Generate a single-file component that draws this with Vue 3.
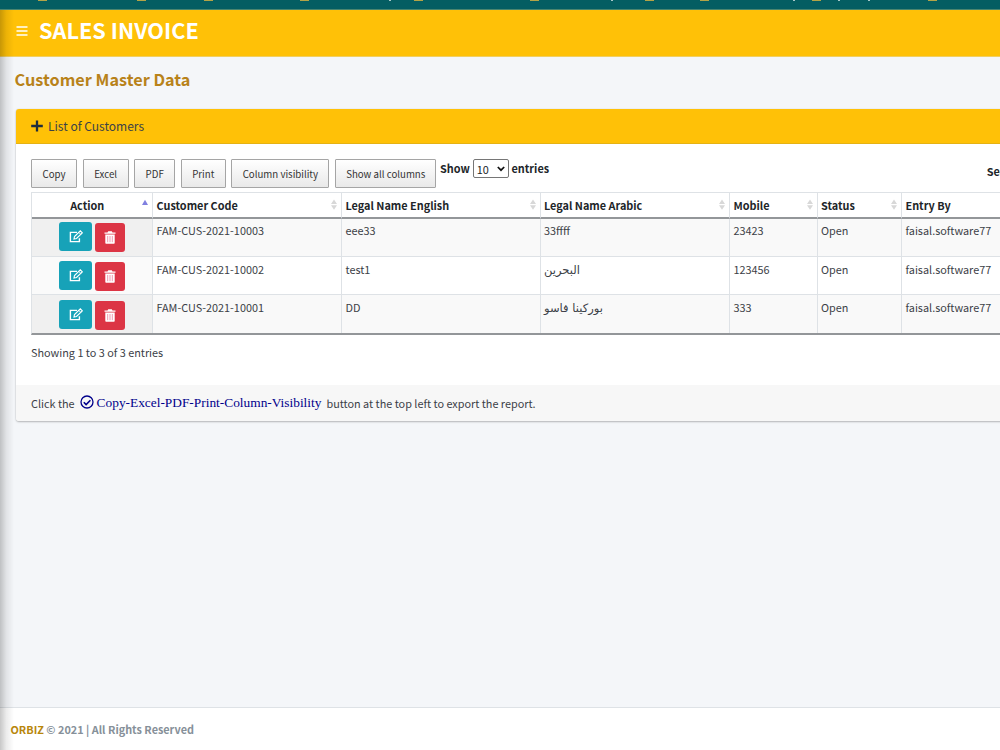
<template>
  <div class="wrapper">
    <nav class="top-menu">
      <svg width="1000" height="2" viewBox="0 0 1000 2">
        <rect v-for="x in menuIcons" :key="x" :x="x" y="0" width="9" height="1" fill="#b3a446" />
        <rect v-for="x in menuTails" :key="x" :x="x" y="0" width="2" height="1" fill="#a9c8ca" />
      </svg>
    </nav>

    <header class="main-header">
      <svg class="bars" width="12" height="12" viewBox="0 0 12 12">
        <path d="M0.5 2h11M0.5 6h11M0.5 10h11" stroke="#fff" stroke-width="1.7" />
      </svg>
      <span class="brand">SALES INVOICE</span>
    </header>

    <main class="content">
      <h1 class="page-title">Customer Master Data</h1>

      <section class="card">
        <div class="card-header">
          <svg class="plus" width="12" height="12" viewBox="0 0 12 12">
            <path d="M6 0.4v11.2M0.2 6h11.6" stroke="#1f2d3d" stroke-width="2.3" />
          </svg>
          <span>List of Customers</span>
        </div>

        <div class="card-body">
          <div class="toolbar">
            <button v-for="b in buttons" :key="b.label" class="dt-button" :style="{ width: b.width + 'px' }">{{ b.label }}</button>
            <div class="length">
              <span>Show</span>
              <span class="select">
                10
                <svg width="8" height="6" viewBox="0 0 8 6">
                  <path d="M0.8 1l3.2 3.2L7.2 1" fill="none" stroke="#111" stroke-width="1.7" />
                </svg>
              </span>
              <span>entries</span>
            </div>
            <span class="search">Search:</span>
          </div>

          <table>
            <colgroup>
              <col v-for="c in columns" :key="c.label" :style="{ width: c.width + 'px' }" />
            </colgroup>
            <thead>
              <tr>
                <th v-for="(c, i) in columns" :key="c.label">
                  <div class="th-inner">
                    <span class="th-label">{{ c.label }}</span>
                    <svg v-if="i === 0" class="sort" width="6" height="12" viewBox="0 0 6 12">
                      <path d="M0 6L3 0.8L6 6z" fill="#8080e0" />
                    </svg>
                    <svg v-else class="sort" width="6" height="12" viewBox="0 0 6 12">
                      <path d="M0 5L3 0.5L6 5zM0 6.2L3 10.7L6 6.2z" fill="#d8d8d8" />
                    </svg>
                  </div>
                </th>
              </tr>
            </thead>
            <tbody>
              <tr v-for="row in customers" :key="row.code">
                <td>
                  <div class="actions">
                    <button class="btn edit">
                      <svg width="14" height="13" viewBox="0 0 14 13" fill="none" stroke="#fff">
                        <path d="M8 2.4H1.4v9.2h9V8.2" stroke-width="1.4" />
                        <path d="M5 9l.5-2.5L11.3.9l2 2L7.5 8.5z" stroke-width="1.2" />
                        <path d="M9.8 2.4l2 2" stroke-width="1" />
                      </svg>
                    </button>
                    <button class="btn delete">
                      <svg width="12" height="13" viewBox="0 0 12 13">
                        <path d="M.5 1.4h3L4.2.3h3.6l.7 1.1h3v1.4H.5z" fill="#fff" />
                        <path d="M1.3 3.5h9.4V12q0 .8-.8.8H2.1q-.8 0-.8-.8z" fill="#fff" />
                        <path d="M3.7 5v6.2M6 5v6.2M8.3 5v6.2" stroke="#ee8fa6" stroke-width=".9" />
                      </svg>
                    </button>
                  </div>
                </td>
                <td>{{ row.code }}</td>
                <td>{{ row.english }}</td>
                <td><span :class="{ arabic: row.rtl }">{{ row.arabic }}</span></td>
                <td>{{ row.mobile }}</td>
                <td>Open</td>
                <td>faisal.software77</td>
              </tr>
            </tbody>
          </table>
          <p class="info">Showing 1 to 3 of 3 entries</p>
        </div>

        <div class="card-footer">
          <span>Click the</span>
          <svg class="check" width="14" height="14" viewBox="0 0 14 14" fill="none" stroke="#00008b">
            <circle cx="7" cy="7" r="6" stroke-width="1.3" />
            <path d="M3.8 7.2l2.3 2.3 4.3-4.3" stroke-width="1.6" />
          </svg>
          <span class="export">Copy-Excel-PDF-Print-Column-Visibility</span>
          <span class="tail">button at the top left to export the report.</span>
        </div>
      </section>
    </main>

    <footer class="main-footer">
      <span class="orbiz">ORBIZ</span><span>© 2021 | All Rights Reserved</span>
    </footer>
    <div class="side-shadow"></div>
  </div>
</template>

<script setup>
import { ref } from 'vue';

// bottom edges of the menu entries scrolled out of view
const menuIcons = [38, 137, 204, 300, 414, 530, 645, 700, 812, 928];
const menuTails = [389, 611, 793, 838, 868];

const buttons = [
  { label: 'Copy', width: 46 },
  { label: 'Excel', width: 46 },
  { label: 'PDF', width: 41 },
  { label: 'Print', width: 45 },
  { label: 'Column visibility', width: 98 },
  { label: 'Show all columns', width: 101.5 }
];

const columns = [
  { label: 'Action', width: 121 },
  { label: 'Customer Code', width: 189 },
  { label: 'Legal Name English', width: 198.5 },
  { label: 'Legal Name Arabic', width: 189.5 },
  { label: 'Mobile', width: 87.5 },
  { label: 'Status', width: 84.5 },
  { label: 'Entry By', width: 140 }
];

const customers = ref([
  { code: 'FAM-CUS-2021-10003', english: 'eee33', arabic: '33ffff', mobile: '23423' },
  { code: 'FAM-CUS-2021-10002', english: 'test1', arabic: 'البحرين', mobile: '123456', rtl: true },
  { code: 'FAM-CUS-2021-10001', english: 'DD', arabic: 'بوركينا فاسو', mobile: '333', rtl: true }
]);
</script>

<style>
body {
  margin: 0;
  overflow: hidden;
}
</style>

<style scoped>
.wrapper {
  position: relative;
  display: flex;
  flex-direction: column;
  width: 1000px;
  height: 750px;
  overflow: hidden;
  background: #f4f6f9;
  color: #3c4147;
  font-family: "Noto Sans CJK SC", "Noto Sans", sans-serif;
  font-size: 10.85px;
  line-height: 16px;
  white-space: nowrap;
}

.wrapper * {
  box-sizing: border-box;
}

svg {
  display: block;
  flex: none;
}

.top-menu {
  flex: none;
  height: 10px;
  background: #045d62;
  border-bottom: 1px solid #4a8570;
}

.main-header {
  flex: none;
  display: flex;
  align-items: flex-start;
  height: 47px;
  padding: 5px 0 0 16px;
  background: #ffc107;
  border-bottom: 1px solid #f1cf62;
}

.bars {
  margin-top: 10px;
}

.brand {
  margin-left: 11px;
  font-size: 21.7px;
  font-weight: 700;
  line-height: 30px;
  color: #fff;
}

.content {
  flex: 1;
  padding: 10px 0 0 16px;
}

.page-title {
  height: 24px;
  margin: 0 0 18px -1.5px;
  font-size: 16.25px;
  font-weight: 700;
  line-height: 24px;
  color: #b8821a;
}

.card {
  width: 1100px;
  border-radius: 3px;
  background: #fff;
  box-shadow: 0 0 1px rgba(0, 0, 0, 0.2), 0 1px 2px rgba(0, 0, 0, 0.25);
}

.card-header {
  display: flex;
  align-items: center;
  height: 35px;
  padding: 0 0 1px 15px;
  border-bottom: 1px solid #e5b214;
  border-radius: 3px 3px 0 0;
  background: #ffc107;
  font-size: 12px;
}

.plus {
  margin-right: 5px;
}

.card-body {
  height: 241px;
  padding: 15px 0 0 15px;
}

.toolbar {
  display: flex;
  gap: 5.6px;
  height: 33px;
}

.dt-button {
  flex: none;
  height: 29px;
  padding: 1px 0 0;
  border: 1px solid #a5a5a5;
  border-radius: 1px;
  background: linear-gradient(#fff, #e9e9e9);
  color: #333;
  font-family: inherit;
  font-size: 9.7px;
  line-height: 26px;
}

.length {
  display: flex;
  gap: 3px;
  width: 109px;
  height: 20px;
  margin-left: -2px;
  font-weight: 700;
  line-height: 18px;
  color: #212529;
}

.select {
  display: flex;
  align-items: center;
  justify-content: space-between;
  width: 36px;
  height: 19px;
  padding: 0 3px;
  border: 1px solid #767676;
  border-radius: 2px;
  font-weight: 400;
}

.search {
  margin-left: 432px;
  font-weight: 700;
  line-height: 24px;
  color: #212529;
}

table {
  width: 1010px;
  table-layout: fixed;
  border-collapse: separate;
  border-spacing: 0;
  border-top: 1px solid #dee2e6;
  border-left: 1px solid #dee2e6;
  border-bottom: 2px solid #939699;
}

th {
  height: 26px;
  padding: 0 4px 0 3.5px;
  border-right: 1px solid #dee2e6;
  border-bottom: 2px solid #939699;
  color: #212529;
  font-weight: 700;
  text-align: left;
}

.th-inner {
  display: flex;
  align-items: center;
}

.th-label {
  flex: 1;
}

th:first-child .th-label {
  padding-right: 3px;
  text-align: center;
}

td {
  height: 38px;
  padding: 3px 4px 0 3.5px;
  border-right: 1px solid #dee2e6;
  border-bottom: 1px solid #dee2e6;
  vertical-align: top;
}

tbody tr:nth-child(n + 2) td {
  padding-top: 4px;
}

tbody tr:last-child td {
  border-bottom: none;
}

tbody tr:nth-child(odd) td {
  background: #f9f9f9;
}

tbody tr td:first-child {
  padding: 3px 0 0 27px;
  background: #fafafa;
}

tbody tr:nth-child(odd) td:first-child {
  background: #f0f0f0;
}

tbody tr:nth-child(2) td:first-child {
  padding-top: 4px;
}

tbody tr:nth-child(3) td:first-child {
  padding-top: 5px;
}

.arabic {
  font-family: "DejaVu Sans", sans-serif;
  font-size: 11.5px;
}

.actions {
  display: flex;
  gap: 3px;
}

.btn {
  display: flex;
  align-items: center;
  justify-content: center;
  height: 29px;
  padding: 0;
  border: none;
  border-radius: 3px;
}

.edit {
  width: 33px;
  background: #17a2b8;
}

.delete {
  width: 30px;
  margin-top: 1px;
  background: #dc3545;
}

.info {
  margin: 9px 0 0;
}

.card-footer {
  display: flex;
  align-items: center;
  height: 36px;
  padding: 0 0 1px 15px;
  border-radius: 0 0 3px 3px;
  background: #f7f7f7;
}

.check {
  margin: -1px 3px 0 5px;
}

.export {
  padding-top: 1px;
  color: #00008b;
  font-family: "Liberation Serif", serif;
  font-size: 13.36px;
}

.tail {
  margin-left: 5px;
}

.main-footer {
  flex: none;
  display: flex;
  gap: 2.5px;
  height: 43px;
  padding: 13px 0 0 10.5px;
  border-top: 1px solid #dee2e6;
  background: #fff;
  color: #869099;
  font-weight: 700;
}

.orbiz {
  color: #b8860b;
}

/* shadow cast by the collapsed sidebar */
.side-shadow {
  position: absolute;
  top: 10px;
  bottom: 0;
  left: 0;
  width: 14px;
  background: linear-gradient(to right, rgba(0, 0, 0, 0.22), rgba(0, 0, 0, 0.08) 45%, transparent);
}
</style>
